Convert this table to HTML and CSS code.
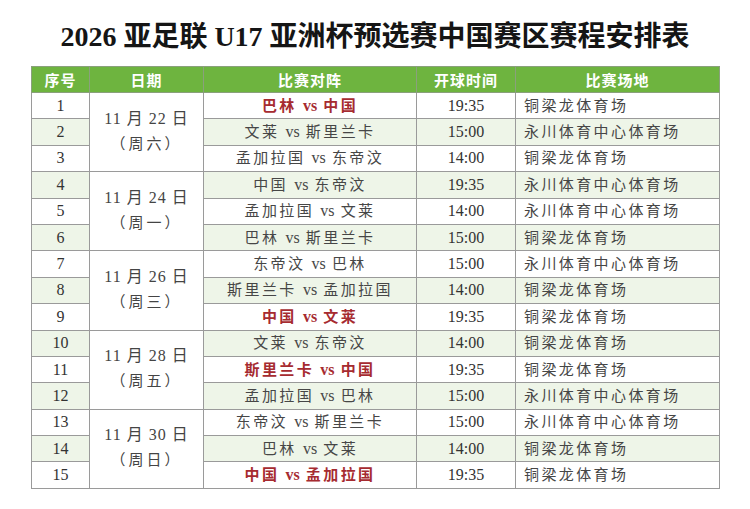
FILE: index.html
```html
<!DOCTYPE html>
<html lang="zh">
<head>
<meta charset="utf-8">
<link rel="stylesheet" href="styles.css">
</head>
<body>
<div class="page">
  <h1 class="title">2026 亚足联 U17 亚洲杯预选赛中国赛区赛程安排表</h1>
  <table class="sched">
    <colgroup>
      <col class="c-no"><col class="c-date"><col class="c-match"><col class="c-time"><col class="c-venue">
    </colgroup>
    <thead>
      <tr><th>序号</th><th>日期</th><th>比赛对阵</th><th>开球时间</th><th>比赛场地</th></tr>
    </thead>
    <tbody>
      <tr><td class="no">1</td><td class="date" rowspan="3">11 月 22 日<br><span class="wk">（周六）</span></td><td class="match red">巴林 <b>vs</b> 中国</td><td class="time">19:35</td><td class="venue">铜梁龙体育场</td></tr>
      <tr class="alt"><td class="no">2</td><td class="match">文莱 <b>vs</b> 斯里兰卡</td><td class="time">15:00</td><td class="venue">永川体育中心体育场</td></tr>
      <tr><td class="no">3</td><td class="match">孟加拉国 <b>vs</b> 东帝汶</td><td class="time">14:00</td><td class="venue">铜梁龙体育场</td></tr>
      <tr class="alt"><td class="no">4</td><td class="date" rowspan="3">11 月 24 日<br><span class="wk">（周一）</span></td><td class="match">中国 <b>vs</b> 东帝汶</td><td class="time">19:35</td><td class="venue">永川体育中心体育场</td></tr>
      <tr><td class="no">5</td><td class="match">孟加拉国 <b>vs</b> 文莱</td><td class="time">14:00</td><td class="venue">永川体育中心体育场</td></tr>
      <tr class="alt"><td class="no">6</td><td class="match">巴林 <b>vs</b> 斯里兰卡</td><td class="time">15:00</td><td class="venue">铜梁龙体育场</td></tr>
      <tr><td class="no">7</td><td class="date" rowspan="3">11 月 26 日<br><span class="wk">（周三）</span></td><td class="match">东帝汶 <b>vs</b> 巴林</td><td class="time">15:00</td><td class="venue">永川体育中心体育场</td></tr>
      <tr class="alt"><td class="no">8</td><td class="match">斯里兰卡 <b>vs</b> 孟加拉国</td><td class="time">14:00</td><td class="venue">铜梁龙体育场</td></tr>
      <tr><td class="no">9</td><td class="match red">中国 <b>vs</b> 文莱</td><td class="time">19:35</td><td class="venue">铜梁龙体育场</td></tr>
      <tr class="alt"><td class="no">10</td><td class="date" rowspan="3">11 月 28 日<br><span class="wk">（周五）</span></td><td class="match">文莱 <b>vs</b> 东帝汶</td><td class="time">14:00</td><td class="venue">铜梁龙体育场</td></tr>
      <tr><td class="no">11</td><td class="match red">斯里兰卡 <b>vs</b> 中国</td><td class="time">19:35</td><td class="venue">铜梁龙体育场</td></tr>
      <tr class="alt"><td class="no">12</td><td class="match">孟加拉国 <b>vs</b> 巴林</td><td class="time">15:00</td><td class="venue">永川体育中心体育场</td></tr>
      <tr><td class="no">13</td><td class="date" rowspan="3">11 月 30 日<br><span class="wk">（周日）</span></td><td class="match">东帝汶 <b>vs</b> 斯里兰卡</td><td class="time">15:00</td><td class="venue">永川体育中心体育场</td></tr>
      <tr class="alt"><td class="no">14</td><td class="match">巴林 <b>vs</b> 文莱</td><td class="time">14:00</td><td class="venue">铜梁龙体育场</td></tr>
      <tr><td class="no">15</td><td class="match red">中国 <b>vs</b> 孟加拉国</td><td class="time">19:35</td><td class="venue">铜梁龙体育场</td></tr>
    </tbody>
  </table>
</div>
</body>
</html>
```
FILE: styles.css
```css
html, body {
  margin: 0;
  padding: 0;
  background: #ffffff;
}
.page {
  width: 750px;
  height: 509px;
  padding-top: 21px;
  box-sizing: border-box;
}
.title {
  margin: 0;
  height: 45px;
  text-align: center;
  font-family: "Liberation Serif", "Noto Sans CJK SC", serif;
  font-weight: bold;
  font-size: 28px;
  line-height: 32px;
  color: #151515;
}
.sched {
  margin-left: 31px;
  width: 688px;
  border-collapse: collapse;
  table-layout: fixed;
  color: #464646;
}
.c-no { width: 58px; }
.c-date { width: 114px; }
.c-match { width: 213px; }
.c-time { width: 99px; }
.c-venue { width: 204px; }
.sched thead tr { height: 26px; }
.sched tbody tr { height: 26.4px; }
.sched th {
  background: #6eb43f;
  color: #ffffff;
  font-family: "Noto Sans CJK SC", sans-serif;
  font-weight: bold;
  font-size: 15px;
  letter-spacing: 1px;
  padding: 0;
  border: 1px solid #8aa07c;
  line-height: 18px;
}
.sched td {
  padding: 0;
  border: 1px solid #9a9a9a;
  text-align: center;
  line-height: 18px;
  font-family: "Liberation Serif", "Noto Sans CJK SC", serif;
  font-size: 16px;
}
.sched td.no, .sched td.time { color: #333; }
.sched tr.alt td { background: #eef5e8; }
.sched td.match, .sched td.venue {
  font-family: "Liberation Serif", "Noto Sans CJK SC", serif;
  font-size: 15px;
  letter-spacing: 2.4px;
}
.sched td.match b {
  font-family: "Liberation Serif", serif;
  font-weight: normal;
  font-size: 16px;
  letter-spacing: 0;
}
.sched tr.alt td.date, .sched td.date {
  background: #ffffff;
  line-height: 25px;
  letter-spacing: 1px;
  font-size: 16px;
  color: #444;
  padding-bottom: 2px;
}
.sched td.date .wk {
  font-size: 15px;
  letter-spacing: 3px;
}
.sched td.venue {
  text-align: left;
  padding-left: 8px;
}
.sched td.red {
  color: #a62b30;
  font-weight: bold;
}
.sched td.red b { font-weight: bold; }
```
